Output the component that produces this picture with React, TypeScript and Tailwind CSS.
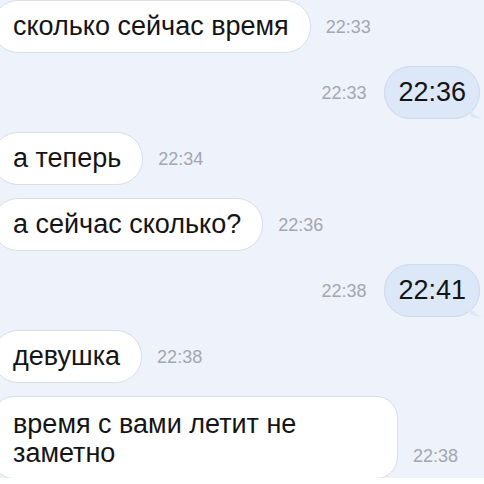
import React from 'react';

type Msg = { side: 'in' | 'out'; text: string; time: string };

const messages: Msg[] = [
  { side: 'in', text: 'сколько сейчас время', time: '22:33' },
  { side: 'out', text: '22:36', time: '22:33' },
  { side: 'in', text: 'а теперь', time: '22:34' },
  { side: 'in', text: 'а сейчас сколько?', time: '22:36' },
  { side: 'out', text: '22:41', time: '22:38' },
  { side: 'in', text: 'девушка', time: '22:38' },
];

function Time({ value }: { value: string }) {
  return <span className="text-[18px] leading-[26px] text-[#a3a7b0] shrink-0">{value}</span>;
}

function Incoming({ text, time }: { text: string; time: string }) {
  return (
    <div className="flex items-center gap-[15px]">
      <div className="relative -ml-[8px] rounded-[26px] border border-[#d9dde6] bg-white py-3 pl-[20px] pr-[21px] text-[27px] leading-[27px] text-[#141414] whitespace-nowrap">
        {text}
      </div>
      <Time value={time} />
    </div>
  );
}

function Outgoing({ text, time }: { text: string; time: string }) {
  return (
    <div className="flex items-center justify-end gap-[18px] pr-[4px]">
      <Time value={time} />
      <div className="relative rounded-[26px] border border-[#cfd9e8] bg-[#dce7f8] py-3 px-[13px] text-[27px] leading-[27px] text-[#141414]">
        {text}
        <svg className="absolute -right-[5px] bottom-[-1px]" width="14" height="12" viewBox="0 0 14 12">
          <path d="M0 0 C2 6 6 10 13 11 C8 12 3 11 0 9 Z" fill="#dce7f8" />
        </svg>
      </div>
    </div>
  );
}

export default function App() {
  return (
    <div className="w-[484px] h-[484px] bg-white overflow-hidden" style={{ fontFamily: '"Liberation Sans", Arial, sans-serif' }}>
      <div className="h-[478px] overflow-hidden bg-[#eef2fa]">
        <div className="flex flex-col gap-[13px]">
          {messages.map((m, i) =>
            m.side === 'in' ? (
              <Incoming key={i} text={m.text} time={m.time} />
            ) : (
              <Outgoing key={i} text={m.text} time={m.time} />
            )
          )}
          <div className="flex items-end gap-[15px]">
            <div className="-ml-[8px] w-[406px] rounded-[22px] border border-[#d9dde6] bg-white pt-[13px] pb-[10px] pl-[20px] pr-[20px] text-[27px] leading-[29px] text-[#141414]">
              время с вами летит не
              <br />
              заметно
            </div>
            <span className="mb-[10px]">
              <Time value="22:38" />
            </span>
          </div>
        </div>
      </div>
    </div>
  );
}
